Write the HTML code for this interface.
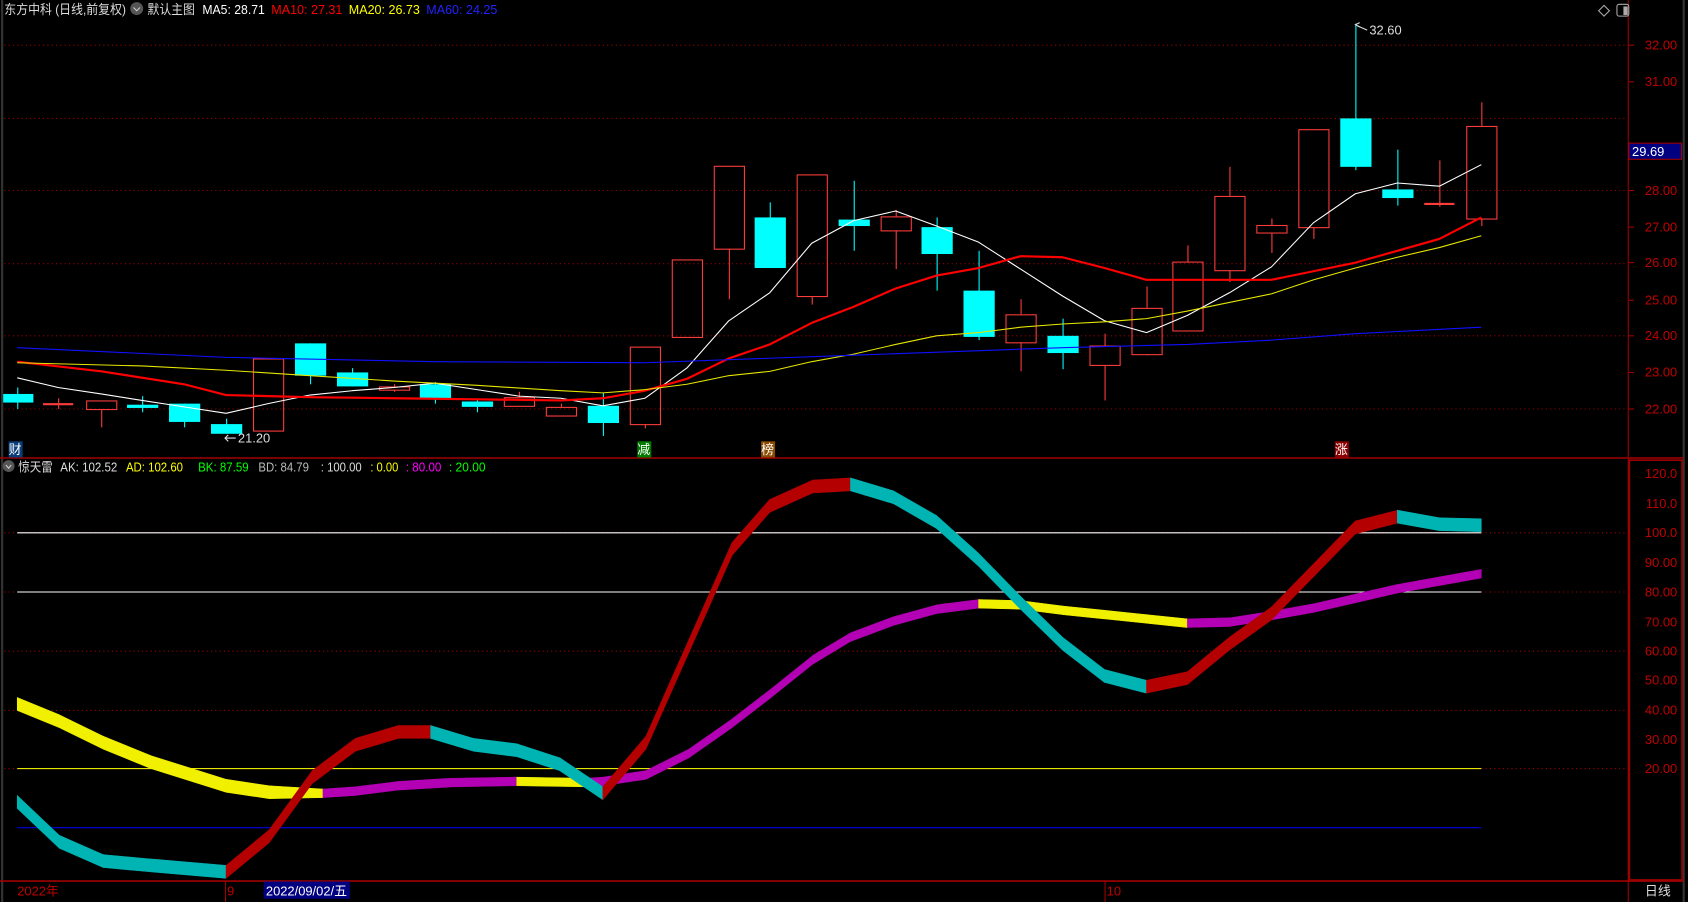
<!DOCTYPE html>
<html><head><meta charset="utf-8"><style>
html,body{margin:0;padding:0;background:#000;overflow:hidden;width:1688px;height:902px}
svg{display:block}
text{font-family:"Liberation Sans","Noto Sans CJK SC",sans-serif;font-size:12px}
</style></head><body>
<svg id="s" width="1688" height="902" viewBox="0 0 1568 838" preserveAspectRatio="none" xmlns="http://www.w3.org/2000/svg">
<rect width="1568" height="838" fill="#000"/>
<g id="grid" stroke="#a00000" stroke-width="1" stroke-dasharray="1,3">
<line x1="4" y1="42" x2="1510" y2="42"/><line x1="4" y1="110" x2="1510" y2="110"/><line x1="4" y1="177" x2="1510" y2="177"/>
<line x1="4" y1="245" x2="1510" y2="245"/><line x1="4" y1="312" x2="1510" y2="312"/><line x1="4" y1="380" x2="1510" y2="380"/>
<line x1="4" y1="495" x2="1510" y2="495"/><line x1="4" y1="550" x2="1510" y2="550"/><line x1="4" y1="605" x2="1510" y2="605"/><line x1="4" y1="660" x2="1510" y2="660"/><line x1="4" y1="714" x2="1510" y2="714"/>
</g>
<line x1="16" y1="495" x2="1376" y2="495" stroke="#fff" stroke-width="1"/>
<line x1="16" y1="550" x2="1376" y2="550" stroke="#fff" stroke-width="1"/>
<line x1="16" y1="714" x2="1376" y2="714" stroke="#e6e600" stroke-width="1"/>
<line x1="16" y1="769" x2="1376" y2="769" stroke="#0000ff" stroke-width="1"/>
<g id="cand"></g>
<g id="ma" fill="none"></g>
<g id="ind" fill="none"></g>
<line x1="2" y1="0" x2="2" y2="838" stroke="#333" stroke-width="2"/>
<line x1="1512.5" y1="0" x2="1512.5" y2="838" stroke="#a00000"/>
<line x1="1564" y1="0" x2="1564" y2="838" stroke="#333" stroke-width="2"/>
<line x1="0" y1="425.5" x2="1564" y2="425.5" stroke="#a00000" stroke-width="1.5"/>
<line x1="0" y1="818.5" x2="1564" y2="818.5" stroke="#a00000" stroke-width="1.5"/>
<rect x="1513.5" y="427.5" width="49" height="390" fill="none" stroke="#a00000" stroke-width="1.5"/>
<g fill="#c00000" text-anchor="end">
<text x="1558" y="46">32.00</text><text x="1558" y="80">31.00</text><text x="1558" y="148">29.00</text><text x="1558" y="181">28.00</text><text x="1558" y="215">27.00</text><text x="1558" y="248">26.00</text><text x="1558" y="283">25.00</text><text x="1558" y="316">24.00</text><text x="1558" y="350">23.00</text><text x="1558" y="384">22.00</text>
<text x="1558" y="444">120.0</text><text x="1558" y="472">110.0</text><text x="1558" y="499">100.0</text><text x="1558" y="527">90.00</text><text x="1558" y="554">80.00</text><text x="1558" y="582">70.00</text><text x="1558" y="609">60.00</text><text x="1558" y="636">50.00</text><text x="1558" y="664">40.00</text><text x="1558" y="691">30.00</text><text x="1558" y="718">20.00</text>
</g>
<g stroke="#a00000"><line x1="1513" y1="42" x2="1518" y2="42"/><line x1="1513" y1="76" x2="1518" y2="76"/><line x1="1513" y1="144" x2="1518" y2="144"/><line x1="1513" y1="177" x2="1518" y2="177"/><line x1="1513" y1="211" x2="1518" y2="211"/><line x1="1513" y1="244" x2="1518" y2="244"/><line x1="1513" y1="279" x2="1518" y2="279"/><line x1="1513" y1="312" x2="1518" y2="312"/><line x1="1513" y1="346" x2="1518" y2="346"/><line x1="1513" y1="380" x2="1518" y2="380"/></g>
<rect x="1513" y="133" width="49" height="15" fill="#000080" stroke="#a00000"/>
<text x="1516" y="145" fill="#fff">29.69</text>
<g lengthAdjust="spacingAndGlyphs">
<text x="4" y="13" fill="#ddd" textLength="113" lengthAdjust="spacingAndGlyphs">东方中科 (日线,前复权)</text>
<text x="137" y="13" fill="#ddd" textLength="44" lengthAdjust="spacingAndGlyphs">默认主图</text>
<text x="188" y="13" fill="#fff" textLength="58" lengthAdjust="spacingAndGlyphs">MA5: 28.71</text>
<text x="252" y="13" fill="#f00" textLength="66" lengthAdjust="spacingAndGlyphs">MA10: 27.31</text>
<text x="324" y="13" fill="#ff0" textLength="66" lengthAdjust="spacingAndGlyphs">MA20: 26.73</text>
<text x="396" y="13" fill="#22f" textLength="66" lengthAdjust="spacingAndGlyphs">MA60: 24.25</text>
</g>
<circle cx="127" cy="8" r="6" fill="#555"/><path d="M124 7 L127 10 L130 7" stroke="#ccc" fill="none"/>
<path d="M1490 5 L1495 10 L1490 15 L1485 10 Z" stroke="#aaa" fill="none"/>
<rect x="1502" y="4" width="11" height="11" rx="2" stroke="#aaa" fill="none"/><rect x="1508" y="6" width="4" height="8" fill="#aaa"/>
<text x="1272" y="32" fill="#ddd">32.60</text><path d="M1261 24 L1270 28" stroke="#ddd"/><path d="M1263 21 L1259 23 L1263 25" stroke="#ddd" fill="none"/>
<text x="221" y="411" fill="#ddd">21.20</text><path d="M209 407 L219 407 M212 404 L209 407 L212 410" stroke="#ddd" fill="none"/>
<rect x="8" y="410" width="13" height="15" fill="#0a3c78"/><text x="8" y="422" fill="#fff">财</text>
<rect x="592" y="410" width="13" height="15" fill="#007a00"/><text x="592" y="422" fill="#fff">减</text>
<rect x="707" y="410" width="13" height="15" fill="#8a4a00"/><text x="707" y="422" fill="#fff">榜</text>
<rect x="1240" y="410" width="13" height="15" fill="#8a0000"/><text x="1240" y="422" fill="#fff">涨</text>
<circle cx="8" cy="433" r="5.5" fill="#555"/><path d="M5.5 432 L8 435 L10.5 432" stroke="#ccc" fill="none"/>
<text x="17" y="438" fill="#ddd" textLength="32" lengthAdjust="spacingAndGlyphs">惊天雷</text>
<text x="56" y="438" fill="#ddd" textLength="53" lengthAdjust="spacingAndGlyphs">AK: 102.52</text>
<text x="117" y="438" fill="#ff0" textLength="53" lengthAdjust="spacingAndGlyphs">AD: 102.60</text>
<text x="184" y="438" fill="#0f0" textLength="47" lengthAdjust="spacingAndGlyphs">BK: 87.59</text>
<text x="240" y="438" fill="#bbb" textLength="47" lengthAdjust="spacingAndGlyphs">BD: 84.79</text>
<text x="298" y="438" fill="#ddd" textLength="38" lengthAdjust="spacingAndGlyphs">: 100.00</text>
<text x="344" y="438" fill="#ff0" textLength="26" lengthAdjust="spacingAndGlyphs">: 0.00</text>
<text x="377" y="438" fill="#f0f" textLength="33" lengthAdjust="spacingAndGlyphs">: 80.00</text>
<text x="417" y="438" fill="#0f0" textLength="34" lengthAdjust="spacingAndGlyphs">: 20.00</text>
<text x="16" y="832" fill="#c00000">2022年</text>
<line x1="209.5" y1="819" x2="209.5" y2="838" stroke="#a00000"/><text x="211" y="832" fill="#c00000">9</text>
<rect x="245" y="819" width="80" height="16" fill="#000080"/><text x="247" y="832" fill="#fff">2022/09/02/五</text>
<line x1="1026.5" y1="819" x2="1026.5" y2="838" stroke="#a00000"/><text x="1028" y="832" fill="#c00000">10</text>
<text x="1528" y="832" fill="#ddd">日线</text>
</svg>
<script>
var NS="http://www.w3.org/2000/svg";
function el(p,t,a){var e=document.createElementNS(NS,t);for(var k in a)e.setAttribute(k,a[k]);document.getElementById(p).appendChild(e);return e;}
var C=[[16,366,374,360,380,0],[54,375,376,370,380,1],[94,372,380,372,397,1],[132,376,379,368,383,0],[171,375,392,375,397,0],[210,394,403,389,403,0],[249,333,400,333,400,1],[288,319,349,319,357,0],[327,346,359,342,359,0],[366,359,362,357,364,1],[404,357,370,355,375,0],[443,373,378,371,383,0],[482,369,377,364,377,1],[521,378,386,375,386,1],[560,377,393,365,405,0],[599,322,394,322,398,1],[638,241,313,241,313,1],[677,154,231,154,278,1],[715,202,249,188,249,0],[754,162,275,162,283,1],[793,204,210,168,233,0],[832,201,214,195,250,1],[870,211,236,202,270,0],[909,270,313,233,316,0],[948,292,318,278,345,1],[987,312,328,296,343,0],[1026,321,339,310,372,1],[1065,286,329,266,330,1],[1103,243,307,228,307,1],[1142,182,251,155,262,1],[1181,209,216,203,235,1],[1220,120,211,120,222,1],[1259,110,155,22,158,0],[1298,176,184,139,191,0],[1337,189,190,149,192,1],[1376,117,203,95,210,1]];
C.forEach(function(c){var col=c[5]?"#ff3c3c":"#00ffff";
 if(c[5]){el("cand","line",{x1:c[0]+.5,y1:c[3],x2:c[0]+.5,y2:c[1],stroke:col});el("cand","line",{x1:c[0]+.5,y1:c[2],x2:c[0]+.5,y2:c[4],stroke:col});
  var h=c[2]-c[1];if(h<2)el("cand","line",{x1:c[0]-14,y1:c[1]+.5,x2:c[0]+14,y2:c[1]+.5,stroke:col,"stroke-width":2});
  else el("cand","rect",{x:c[0]-13.5,y:c[1]+.5,width:28,height:h,fill:"none",stroke:col});}
 else{el("cand","line",{x1:c[0]+.5,y1:c[3],x2:c[0]+.5,y2:c[4],stroke:col});el("cand","rect",{x:c[0]-14,y:c[1],width:29,height:Math.max(2,c[2]-c[1]),fill:col});}
});
function pl(g,pts,col,w){el(g,"polyline",{points:pts.map(function(p){return p.join(",")}).join(" "),stroke:col,"stroke-width":w,fill:"none","stroke-linejoin":"round"});}
pl("ma",[[16,351],[54,360],[94,366],[132,372],[171,378],[210,384],[249,375],[288,367],[327,363],[366,360],[404,356],[443,362],[482,368],[521,370],[560,377],[599,370],[638,342],[677,298],[715,272],[754,226],[793,205],[832,196],[870,210],[909,225],[948,250],[987,275],[1026,298],[1065,309],[1103,293],[1142,272],[1181,248],[1220,207],[1259,180],[1298,170],[1337,173],[1376,153]],"#fff",1);
pl("ma",[[16,336],[94,345],[171,357],[210,367],[288,369],[366,370],[443,371],[521,372],[560,370],[599,363],[638,352],[677,333],[715,320],[754,300],[793,285],[832,268],[870,256],[909,249],[948,238],[987,239],[1026,249],[1065,260],[1103,260],[1142,260],[1181,260],[1220,252],[1259,244],[1298,233],[1337,222],[1376,202]],"#f00",2);
pl("ma",[[16,337],[132,340],[210,344],[288,349],[366,354],[443,358],[521,363],[560,365],[599,362],[638,357],[677,349],[715,345],[754,336],[793,329],[832,320],[870,312],[909,309],[948,304],[987,301],[1026,299],[1065,296],[1103,289],[1142,281],[1181,273],[1220,260],[1259,249],[1298,239],[1337,230],[1376,219]],"#e6e600",1);
pl("ma",[[16,323],[210,332],[404,336],[599,337],[793,330],[987,323],[1103,320],[1181,316],[1259,310],[1376,304]],"#1010ff",1);
function band(pts,cd,cu,wf){for(var i=0;i<pts.length-1;i++){var a=pts[i],b=pts[i+1];var col=b[1]>a[1]?cd:cu;var wa=wf(a[0]),wb=wf(b[0]);
 el("ind","polygon",{points:[a[0],a[1]-wa/2,b[0],b[1]-wb/2,b[0],b[1]+wb/2,a[0],a[1]+wa/2].join(" "),fill:col,stroke:col,"stroke-width":.5});}}
band([[16,654],[55,670],[96,690],[140,708],[210,730],[250,736],[300,737],[330,735],[370,730],[420,727],[480,726],[545,727],[560,726],[600,720],[640,700],[680,672],[715,645],[755,613],[790,592],[830,577],[870,566],[909,561],[948,562],[987,567],[1026,571],[1065,575],[1103,579],[1142,578],[1181,572],[1220,565],[1259,556],[1298,547],[1337,540],[1376,533]],"#f0f000","#b400b4",function(x){return x<300?12:8;});
band([[16,745],[55,782],[96,800],[140,804],[210,810],[250,777],[290,722],[330,692],[370,680],[400,680],[440,692],[480,697],[520,710],[560,737],[600,690],[640,600],[680,510],[715,470],[755,452],[790,450],[830,462],[870,485],[909,520],[948,560],[987,598],[1026,628],[1065,638],[1103,630],[1142,598],[1181,570],[1220,530],[1259,490],[1298,480],[1337,487],[1376,488]],"#00b4b4","#b40000",function(x){return 12;});
</script>
</body></html>
